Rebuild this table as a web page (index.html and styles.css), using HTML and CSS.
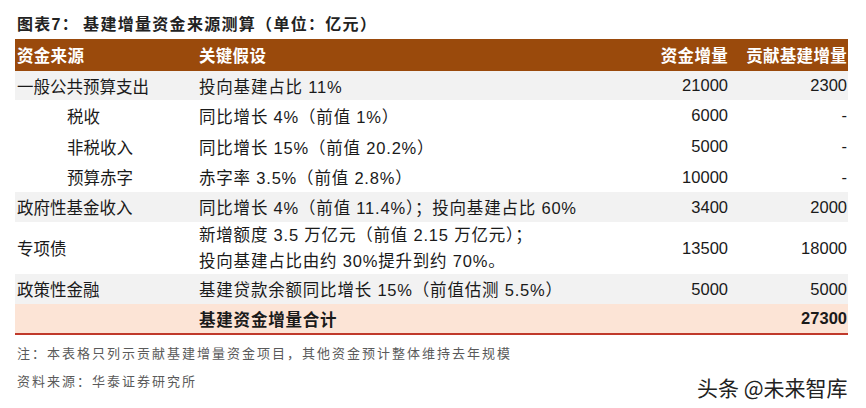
FILE: index.html
```html
<!DOCTYPE html>
<html lang="zh">
<head>
<meta charset="utf-8">
<link rel="stylesheet" href="styles.css">
</head>
<body>
<div class="page">
  <div class="title">图表7：<span class="title-gap"></span>基建增量资金来源测算（单位：亿元）</div>
  <table class="tbl">
    <colgroup>
      <col class="c1"><col class="c2"><col class="c3"><col class="c4">
    </colgroup>
    <thead>
      <tr class="head">
        <th class="l">资金来源</th>
        <th class="l">关键假设</th>
        <th class="r">资金增量</th>
        <th class="r">贡献基建增量</th>
      </tr>
    </thead>
    <tbody>
      <tr class="grey h29">
        <td>一般公共预算支出</td>
        <td class="as">投向基建占比 11%</td>
        <td class="r">21000</td>
        <td class="r">2300</td>
      </tr>
      <tr class="h31">
        <td class="sub">税收</td>
        <td class="as">同比增长 4%（前值 1%）</td>
        <td class="r">6000</td>
        <td class="r">-</td>
      </tr>
      <tr class="h31">
        <td class="sub">非税收入</td>
        <td class="as">同比增长 15%（前值 20.2%）</td>
        <td class="r">5000</td>
        <td class="r">-</td>
      </tr>
      <tr class="h30">
        <td class="sub">预算赤字</td>
        <td class="as">赤字率 3.5%（前值 2.8%）</td>
        <td class="r">10000</td>
        <td class="r">-</td>
      </tr>
      <tr class="grey h30">
        <td>政府性基金收入</td>
        <td class="as">同比增长 4%（前值 11.4%）；投向基建占比 60%</td>
        <td class="r">3400</td>
        <td class="r">2000</td>
      </tr>
      <tr class="h52">
        <td>专项债</td>
        <td class="as two">新增额度 3.5 万亿元（前值 2.15 万亿元）；<br>投向基建占比由约 30%提升到约 70%。</td>
        <td class="r">13500</td>
        <td class="r">18000</td>
      </tr>
      <tr class="grey h30">
        <td>政策性金融</td>
        <td class="as">基建贷款余额同比增长 15%（前值估测 5.5%）</td>
        <td class="r">5000</td>
        <td class="r">5000</td>
      </tr>
      <tr class="total h30">
        <td></td>
        <td class="as b">基建资金增量合计</td>
        <td class="r"></td>
        <td class="r b">27300</td>
      </tr>
    </tbody>
  </table>
  <div class="note">注：本表格只列示贡献基建增量资金项目，其他资金预计整体维持去年规模</div>
  <div class="note">资料来源：华泰证券研究所</div>
  <div class="watermark">头条 @未来智库</div>
</div>
</body>
</html>
```

FILE: styles.css
```css
html, body {
  margin: 0;
  padding: 0;
  background: #ffffff;
}

.page {
  position: relative;
  width: 866px;
  height: 408px;
  padding: 13px 18px 0 15px;
  box-sizing: border-box;
  font-family: "Liberation Sans", "Noto Sans CJK SC", sans-serif;
  color: #1a1a1a;
}

.title {
  height: 24px;
  line-height: 24px;
  margin: 0 0 2px 2px;
  font-size: 16px;
  font-weight: bold;
  color: #222;
  letter-spacing: 1.3px;
}

.title-gap {
  display: inline-block;
  width: 4px;
}

.tbl {
  width: 833px;
  border-collapse: collapse;
  table-layout: fixed;
  font-size: 16.5px;
  border-bottom: 2px solid #c0392b;
}

.c1 { width: 182px; }
.c2 { width: 412px; }
.c3 { width: 120px; }
.c4 { width: 119px; }

.tbl th,
.tbl td {
  padding: 0 1px 0 2px;
  white-space: nowrap;
  vertical-align: middle;
}

.tbl td.sub { padding-left: 52px; }

.tbl td.as { letter-spacing: 0.8px; }

.head {
  height: 32px;
  background: #9a4a0c;
}

.head th {
  color: #ffffff;
  font-weight: bold;
  letter-spacing: 0.3px;
}

.l { text-align: left; }
.r { text-align: right; }
.b { font-weight: bold; }

.grey { background: #f2f2f2; }
.total { background: #fce4d6; }

.h29 { height: 29px; }
.h30 { height: 30px; }
.h31 { height: 31px; }
.h52 { height: 52px; }

.two { line-height: 26px; }

.note {
  height: 28px;
  line-height: 28px;
  margin-left: 2px;
  font-size: 13px;
  letter-spacing: 2px;
  color: #5a5a5a;
}

.tbl + .note { margin-top: 5px; }

.watermark {
  position: absolute;
  left: 697px;
  top: 373px;
  font-size: 21px;
  line-height: 28px;
  color: #222;
  font-family: "Noto Sans CJK SC", sans-serif;
  text-shadow: 1px 1px 0 #fff, -1px -1px 0 #fff;
}
```
